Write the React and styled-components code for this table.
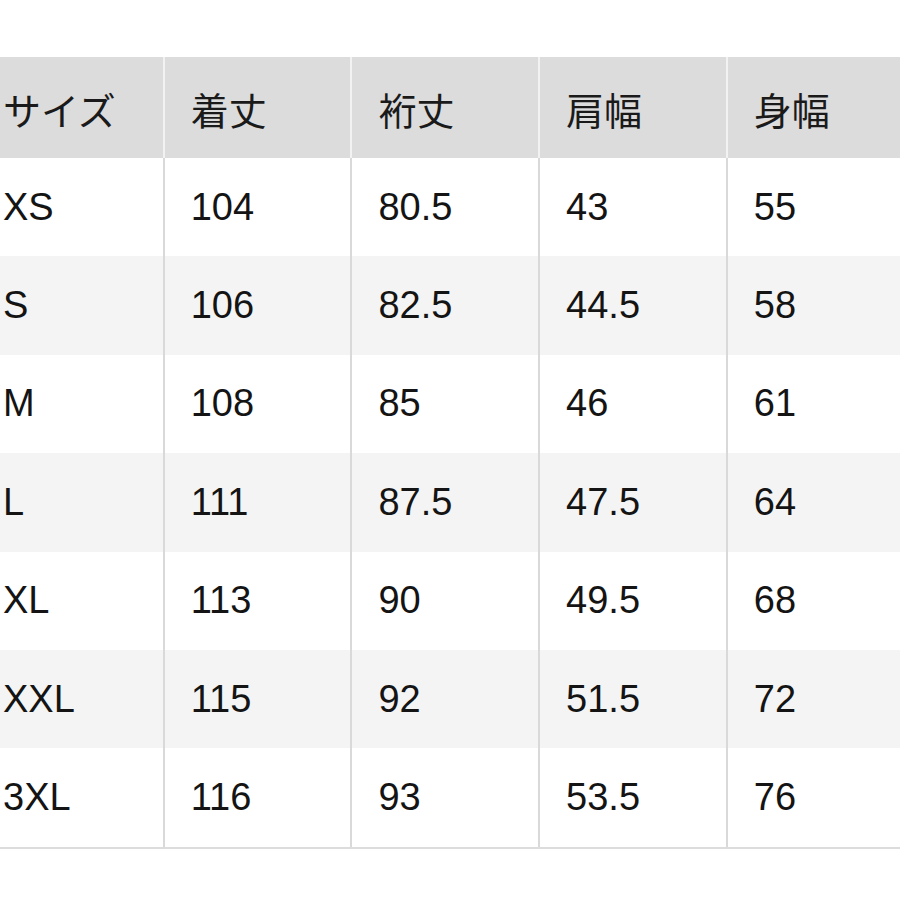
import React from 'react';
import styled, { createGlobalStyle } from 'styled-components';

const GlobalStyle = createGlobalStyle`
  html, body {
    margin: 0;
    padding: 0;
    background: #ffffff;
    overflow: hidden;
  }
`;

const headers = ['サイズ', '着丈', '裄丈', '肩幅', '身幅'];

const rows = [
  ['XS', '104', '80.5', '43', '55'],
  ['S', '106', '82.5', '44.5', '58'],
  ['M', '108', '85', '46', '61'],
  ['L', '111', '87.5', '47.5', '64'],
  ['XL', '113', '90', '49.5', '68'],
  ['XXL', '115', '92', '51.5', '72'],
  ['3XL', '116', '93', '53.5', '76'],
];

export default function App() {
  return (
    <Page>
      <GlobalStyle />
      <Table>
        <Row $head>
          {headers.map((h, i) => (
            <HeadCell key={h} $first={i === 0}>{h}</HeadCell>
          ))}
        </Row>
        {rows.map((r, ri) => (
          <Row key={r[0]} $shade={ri % 2 === 1}>
            {r.map((v, i) => (
              <Cell key={i} $first={i === 0}>{v}</Cell>
            ))}
          </Row>
        ))}
      </Table>
    </Page>
  );
}

const Page = styled.div`
  width: 900px;
  height: 900px;
  padding-top: 57px;
  box-sizing: border-box;
  overflow: hidden;
  background: #fff;
`;

const Table = styled.div`
  margin-left: -25px;
  width: 940px;
  border-bottom: 2px solid #dcdcdc;
`;

const Row = styled.div`
  display: grid;
  grid-template-columns: repeat(5, 187.7px);
  height: ${(p) => (p.$head ? '101px' : '98.4px')};
  background: ${(p) => (p.$head ? '#dcdcdc' : p.$shade ? '#f4f4f4' : '#ffffff')};
`;

const HeadCell = styled.div`
  display: flex;
  align-items: center;
  padding-left: 26px;
  border-left: 2px solid ${(p) => (p.$first ? 'transparent' : '#f2f2f2')};
  font-family: "Noto Sans CJK JP", "Noto Sans", sans-serif;
  font-size: 38px;
  color: #1a1a1a;
  padding-top: 2px;
`;

const Cell = styled.div`
  display: flex;
  align-items: center;
  padding-left: 26px;
  border-left: 2px solid ${(p) => (p.$first ? 'transparent' : '#d9d9d9')};
  font-family: "Liberation Sans", Arial, sans-serif;
  font-size: 38px;
  color: #141414;
`;
